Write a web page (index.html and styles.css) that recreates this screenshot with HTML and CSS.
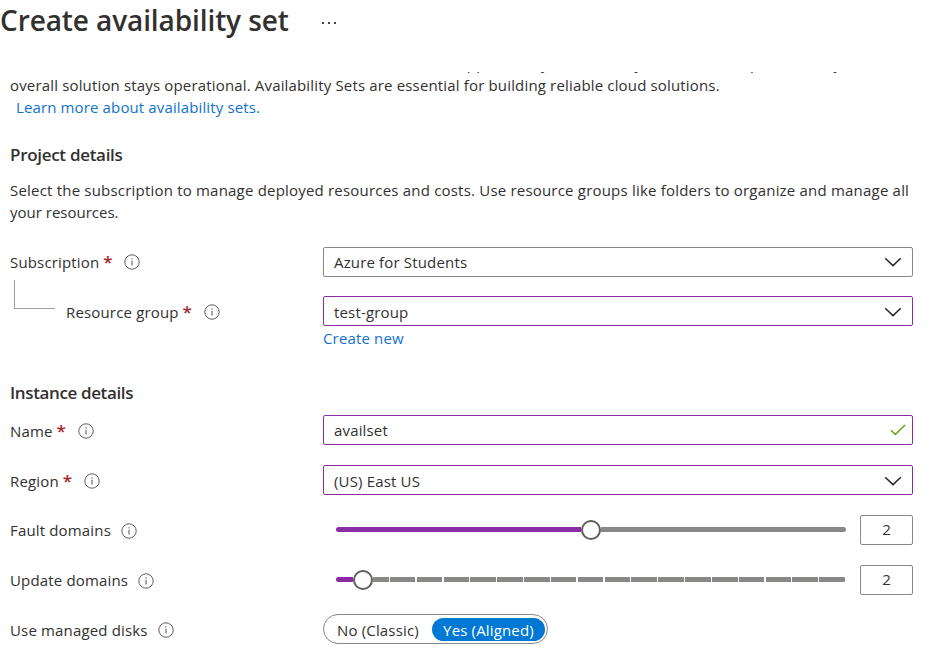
FILE: index.html
```html
<!DOCTYPE html>
<html lang="en">
<head>
<meta charset="utf-8">
<title>Create availability set</title>
<link rel="stylesheet" href="styles.css">
</head>
<body>
<svg width="0" height="0" class="defs">
  <symbol id="info" viewBox="0 0 16 16"><circle cx="8" cy="8" r="7.200" fill="none" stroke="#605e5c"/><path d="M8 6.8v4.7M8 4.3v1.2" stroke="#605e5c" stroke-width="1.1"/></symbol>
  <symbol id="chevron" viewBox="0 0 18 10"><path d="M1.2 1.2 9 8.6l7.800-7.400" fill="none" stroke="#292827" stroke-width="1.500"/></symbol>
</svg>
<header class="header"><h1 class="title">Create availability set</h1><span class="more"><i></i><i></i><i></i></span></header>
<main class="content">
  <div class="intro">
    <p class="line clipped">units, and network switches. If a hardware or software failure happens, only a subset of your VMs are impacted and your</p>
    <p class="line overall">overall solution stays operational. Availability Sets are essential for building reliable cloud solutions.</p>
  </div>
  <a class="link learn">Learn more about availability sets.</a>
  <h2 class="section project">Project details</h2>
  <p class="line select">Select the subscription to manage deployed resources and costs. Use resource groups like folders to organize and manage all</p>
  <p class="line your">your resources.</p>
  <div class="row subscription">
    <div class="label"><span>Subscription</span><b>*</b><svg class="info"><use href="#info"/></svg></div>
    <div class="box"><span>Azure for Students</span><svg class="chevron"><use href="#chevron"/></svg></div>
  </div>
  <div class="row group">
    <div class="elbow"></div>
    <div class="label low"><span>Resource group</span><b>*</b><svg class="info"><use href="#info"/></svg></div>
    <div class="box edited"><span class="low">test-group</span><svg class="chevron low"><use href="#chevron"/></svg></div>
  </div>
  <a class="link create">Create new</a>
  <h2 class="section instance">Instance details</h2>
  <div class="row name">
    <div class="label low"><span>Name</span><b>*</b><svg class="info"><use href="#info"/></svg></div>
    <div class="box edited"><span>availset</span><svg class="check" viewBox="0 0 16 12"><path d="M1 6.200 5.300 10.500 15 1" fill="none" stroke="#57a300" stroke-width="1.300"/></svg></div>
  </div>
  <div class="row region">
    <div class="label low"><span>Region</span><b>*</b><svg class="info"><use href="#info"/></svg></div>
    <div class="box edited"><span class="low">(US) East US</span><svg class="chevron low"><use href="#chevron"/></svg></div>
  </div>
  <div class="row fault">
    <div class="label"><span>Fault domains</span><svg class="info down"><use href="#info"/></svg></div>
    <div class="slider"><div class="fill half"></div><div class="thumb"></div><div class="rest"></div></div>
    <div class="number">2</div>
  </div>
  <div class="row update">
    <div class="label"><span>Update domains</span><svg class="info down"><use href="#info"/></svg></div>
    <div class="slider"><div class="fill step"></div><div class="thumb"></div><div class="rest ticks"></div></div>
    <div class="number">2</div>
  </div>
  <div class="row disks">
    <div class="label low"><span>Use managed disks</span><svg class="info"><use href="#info"/></svg></div>
    <div class="toggle"><span class="no">No (Classic)</span><span class="yes">Yes (Aligned)</span></div>
  </div>
</main>
</body>
</html>
```
FILE: styles.css
```css
* { box-sizing: border-box; }
body { margin: 0; width: 952px; height: 666px; overflow: hidden; background: #fff; color: #323130; font: 15px/22px "Open Sans", "Noto Sans", sans-serif; letter-spacing: 0.16px; }
h1, h2, p { margin: 0; }
.defs { display: block; }
.header { display: flex; height: 72px; }
.title { width: 322px; font-size: 28px; line-height: 40px; font-weight: 600; white-space: nowrap; letter-spacing: -0.1px; }
.more { display: flex; gap: 4px; padding-top: 22px; }
.more i { width: 2px; height: 2px; background: #484644; }
.content { padding-left: 10px; display: flex; flex-direction: column; align-items: flex-start; }
.line { white-space: nowrap; height: 22px; }
.intro { height: 24px; overflow: hidden; display: flex; flex-direction: column; justify-content: flex-end; }
.intro .line { flex: none; }
.clipped { letter-spacing: 0.12px; }
.select { letter-spacing: 0.2px; }
.your { letter-spacing: 0; }
.link { color: #0f73cf; white-space: nowrap; }
.learn { margin-left: 6px; letter-spacing: 0.13px; }
.section { font-size: 17px; line-height: 24px; font-weight: 600; white-space: nowrap; letter-spacing: -0.3px; }
.project { margin-top: 25px; }
.instance { letter-spacing: -0.37px; }
.select { margin-top: 12px; }
.row { display: flex; width: 903px; height: 30px; align-items: center; }
.label { display: flex; flex: 0 0 313px; align-items: center; white-space: nowrap; }
.low { padding-top: 1px; margin-bottom: -1px; }
.label b { color: #a4262c; font-weight: 600; font-size: 17px; margin-left: 4px; width: 10px; }
.info { width: 16px; height: 16px; margin-left: 10px; }
.info.down { margin-top: 2px; }
.label b + .info { margin-left: 11px; }
.box { flex: 1; height: 30px; border: 1px solid #8a8886; border-radius: 2px; padding: 0 10px; display: flex; align-items: center; justify-content: space-between; }
.box.edited { border-color: #8a2da5; }
.chevron { width: 18px; height: 10px; }
.chevron.low { height: 10px; padding: 0; margin: 1px 0 -1px; }
.check { width: 16px; height: 12px; margin-right: -4px; }
.subscription { margin-top: 24px; }
.group { margin-top: 19px; }
.elbow { width: 41px; height: 29px; margin: -33px 11px 0 4px; border: solid #a19f9d; border-width: 0 0 1px 1px; }
.group .label { flex-basis: 257px; }
.create { margin: 1px 0 0 313px; }
.instance { margin-top: 32px; }
.name { margin-top: 10px; }
.region, .fault, .update { margin-top: 20px; }
.disks { margin-top: 19px; }
.slider { width: 510px; margin: 0 14px 0 13px; display: flex; align-items: center; }
.fill { height: 5px; margin-bottom: 1px; background: #8a2da5; border-radius: 3px 0 0 3px; }
.half { width: 245px; }
.step { width: 17px; }
.thumb { flex: none; width: 20px; height: 20px; border: 2px solid #605e5c; border-radius: 50%; }
.rest { flex: 1; height: 5px; margin-bottom: 1px; background: #8a8886; border-radius: 0 3px 3px 0; }
.ticks { background: repeating-linear-gradient(90deg, #8a8886 0 25.600px, #fff 25.600px 26.840px) -10px 0 / 520px 5px; }
.number { width: 53px; height: 30px; border: 1px solid #8a8886; border-radius: 2px; text-align: center; line-height: 26px; }
.toggle { width: 225px; height: 30px; border: 1px solid #8a8886; border-radius: 15px; display: flex; align-items: center; padding: 0 2px 0 13px; white-space: nowrap; justify-content: space-between; }
.no { padding-top: 2px; }
.yes { width: 113px; height: 23px; line-height: 25px; border-radius: 12px; background: #0078d4; color: #fff; text-align: center; }
```
